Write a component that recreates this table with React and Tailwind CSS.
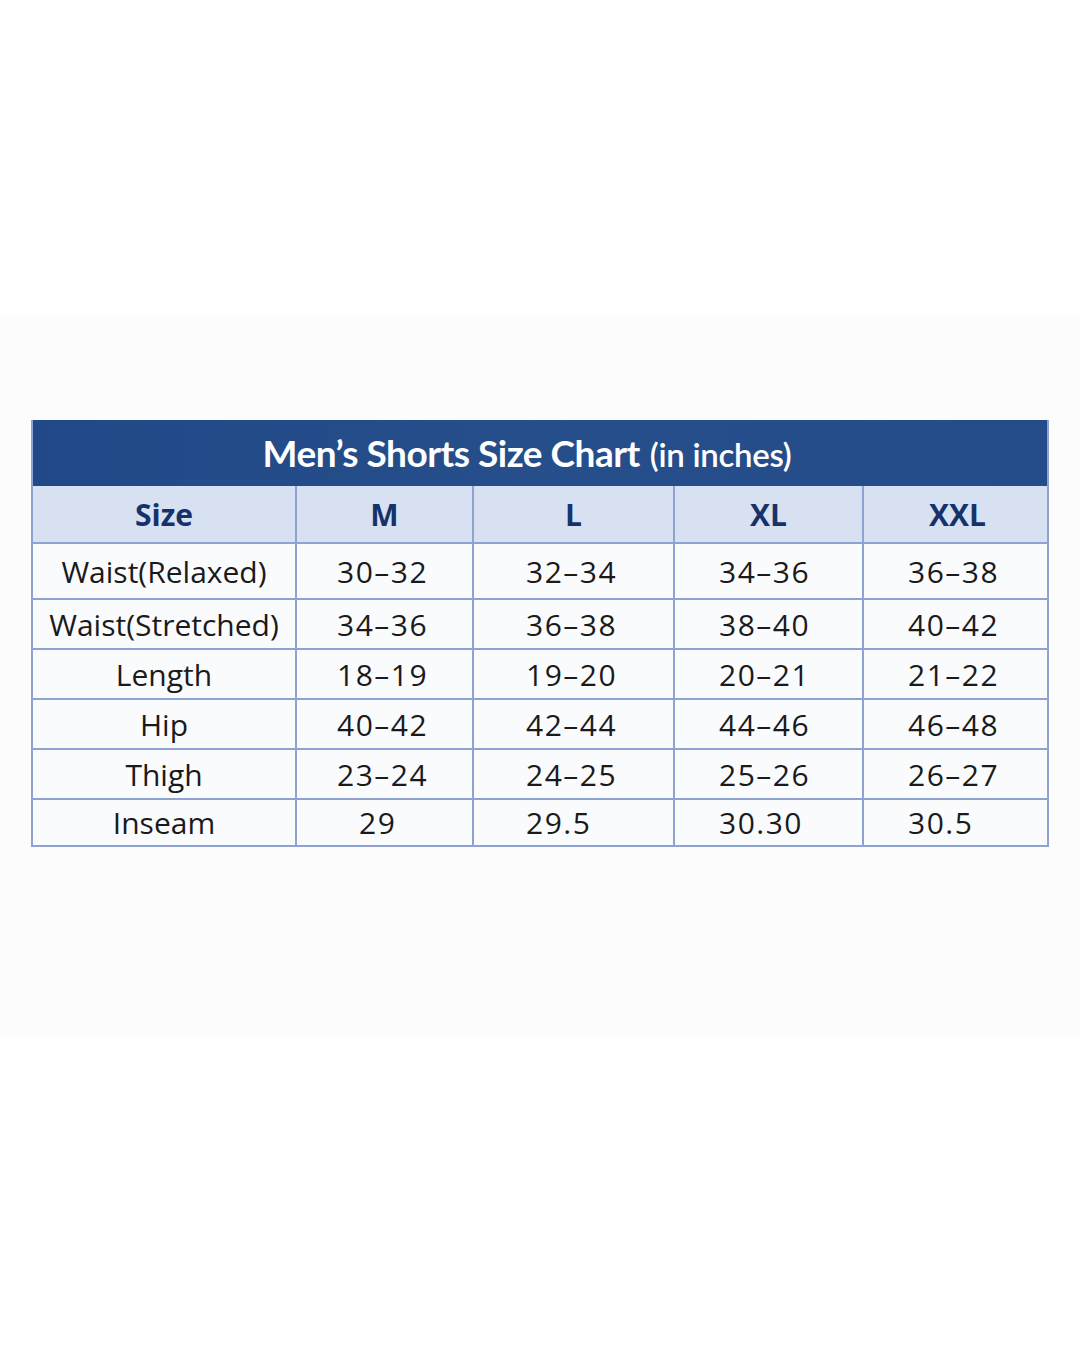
const sizes = ["M", "L", "XL", "XXL"];

const rows = [
  ["Waist(Relaxed)", "30–32", "32–34", "34–36", "36–38"],
  ["Waist(Stretched)", "34–36", "36–38", "38–40", "40–42"],
  ["Length", "18–19", "19–20", "20–21", "21–22"],
  ["Hip", "40–42", "42–44", "44–46", "46–48"],
  ["Thigh", "23–24", "24–25", "25–26", "26–27"],
  ["Inseam", "29", "29.5", "30.30", "30.5"],
];

const heights = ["h-[56px]", "h-[50px]", "h-[50px]", "h-[50px]", "h-[50px]", "h-[45px]"];
// left offsets so values line up the way the printed chart does
const pads = ["", "pl-[40px]", "pl-[52px]", "pl-[44px]", "pl-[44px]"];
const cols = "grid grid-cols-[264px_177px_201px_189px_187px]";

export default function App() {
  return (
    <div className="w-[1080px] h-[1350px] bg-white flex flex-col">
      <div className="h-[315px] bg-white" />

      <div className="h-[720px] bg-[#fcfcfd] pt-[105px] px-[31px]">
        <div className="border-2 border-[#8fa3d1] border-t-0 w-[1018px]">
          {/* Title */}
          <div className="h-[66px] bg-gradient-to-r from-[#224987] via-[#254e8b] to-[#244c89] flex items-center justify-center text-white font-['Lato',sans-serif] pr-[26px]">
            <span className="text-[37px] font-bold tracking-[-0.5px]">Men’s Shorts Size Chart</span>
            <span className="text-[33px] font-semibold ml-[10px] mt-[3px] tracking-[-0.3px]">(in inches)</span>
          </div>

          {/* Header */}
          <div className={`${cols} h-[58px] bg-[#d8e1f2] border-b-2 border-[#8fa3d1] text-[#15336a] font-bold text-[30px] font-['Open_Sans',sans-serif]`}>
            <div className="flex items-center justify-center border-r-2 border-[#8fa3d1]">Size</div>
            {sizes.map((s, i) => (
              <div
                key={s}
                className={`flex items-center justify-center ${i < 3 ? "border-r-2 border-[#8fa3d1]" : ""}`}
              >
                {s}
              </div>
            ))}
          </div>

          {/* Rows */}
          {rows.map((r, ri) => (
            <div
              key={r[0]}
              className={`${cols} ${heights[ri]} bg-[#fafbfd] text-[#1a1a1a] text-[30px] font-['Open_Sans',sans-serif] ${ri < rows.length - 1 ? "border-b-2 border-[#8fa3d1]" : ""}`}
            >
              {r.map((c, ci) => (
                <div
                  key={ci}
                  className={`flex items-center ${
                    ci === 0
                      ? "justify-center"
                      : `justify-start tracking-[1.5px] ${ri === 5 && ci === 1 ? "pl-[62px]" : pads[ci]}`
                  } ${ci < 4 ? "border-r-2 border-[#8fa3d1]" : ""}`}
                >
                  {c}
                </div>
              ))}
            </div>
          ))}
        </div>
      </div>

      <div className="flex-1 bg-white" />
    </div>
  );
}
